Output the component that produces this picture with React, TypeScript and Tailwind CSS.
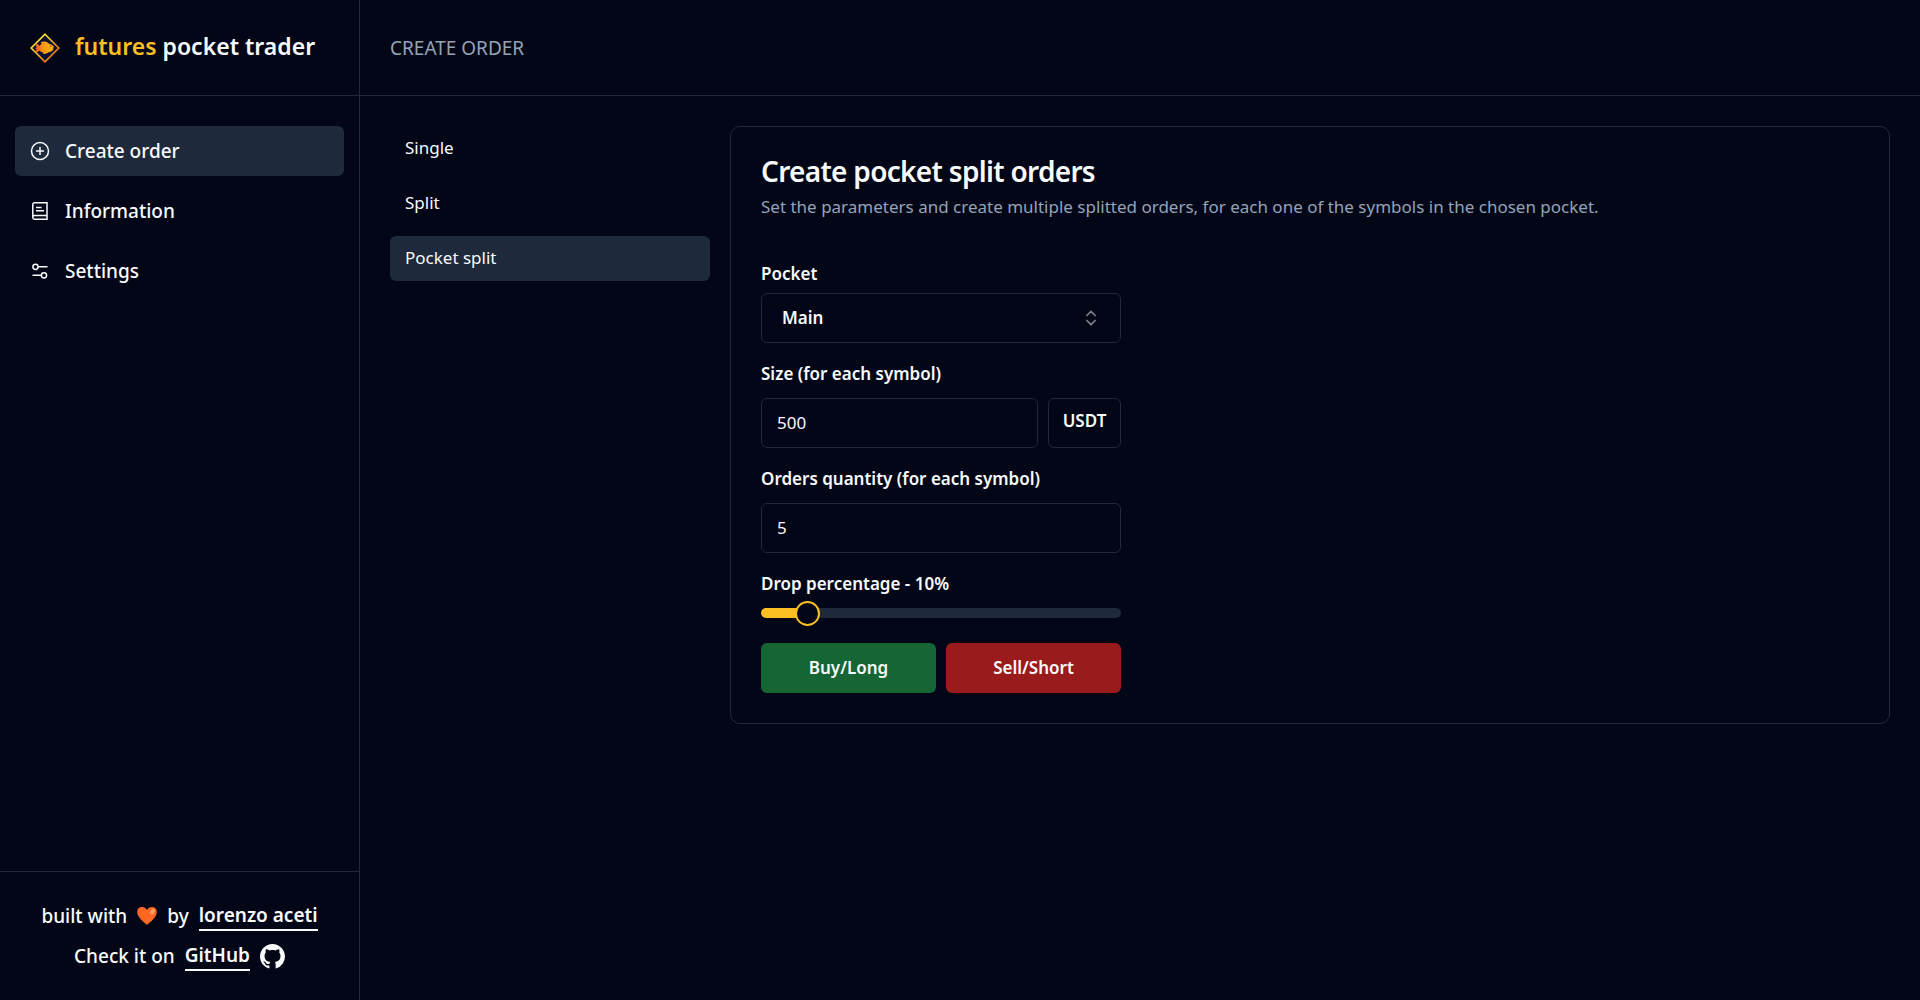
import { useState } from "react";
import type { ReactNode } from "react";
import { ChevronsUpDown } from "lucide-react";

function Logo() {
  return (
    <svg className="size-[30px] shrink-0" viewBox="0 0 30 30" aria-hidden="true">
      <defs>
        <linearGradient id="frame" x1="0" y1="0" x2="1" y2="1">
          <stop offset="0.3" stopColor="#fde02b" />
          <stop offset="0.7" stopColor="#f0831a" />
        </linearGradient>
        <linearGradient id="fish" x1="0" y1="0" x2="1" y2="0">
          <stop offset="0" stopColor="#f4511e" />
          <stop offset="0.45" stopColor="#fb9a10" />
          <stop offset="1" stopColor="#ffb30f" />
        </linearGradient>
      </defs>
      <path d="M15 1.2 28.8 15 15 28.8 1.2 15Z" fill="#0b1036" stroke="url(#frame)" strokeWidth="1.6" />
      <path
        d="M5.500 10.500c1.600.2 3 1.200 4 2.400.6-1 1.300-1.700 2.100-2.200l-.9-1.600c2.700-1 6.200-.7 8 1.300 2.500.7 4.500 2.200 5.300 3.700l-1.300 1.100 1 .7c-1 1.700-3 2.900-5.200 3.400-1.300 1.200-3.500 1.900-5.500 1.700l.3-1.400c-1.600-.3-3-1-3.900-2.100-1 1.100-2.400 1.900-4.200 2.100.3-1.300.8-2.400 1.500-3.300l-1.700-.8 1.700-1.300C6.100 13.200 5.700 12 5.500 10.500Z"
        fill="url(#fish)"
      />
      <circle cx="20.600" cy="13.200" r="0.700" fill="#7a3306" />
    </svg>
  );
}

function PlusCircleIcon() {
  return (
    <svg className="size-5" viewBox="0 0 20 20" fill="none" stroke="currentColor" strokeWidth="1.500" aria-hidden="true">
      <circle cx="10" cy="10" r="8.500" />
      <path d="M10 6v8M6 10h8" />
    </svg>
  );
}

function ReaderIcon() {
  return (
    <svg className="size-5" viewBox="0 0 20 20" fill="none" stroke="currentColor" strokeWidth="1.500" aria-hidden="true">
      <path d="M17 14.500V1.800H4.500A1.700 1.700 0 0 0 2.800 3.500v13a1.700 1.700 0 0 0 1.700 1.700H17v-3.700H4.500a1.700 1.700 0 0 0-1.700 1.700" />
      <path d="M6 6.500h5.500M6 9.800h8" />
    </svg>
  );
}

function SlidersIcon() {
  return (
    <svg className="size-5" viewBox="0 0 20 20" fill="none" stroke="currentColor" strokeWidth="1.500" aria-hidden="true">
      <circle cx="5.500" cy="5.800" r="2.600" />
      <path d="M8.200 5.800H17.500M2.500 14.300h9" />
      <circle cx="14" cy="14.300" r="2.600" />
    </svg>
  );
}

function HeartIcon() {
  return (
    <svg className="size-5" viewBox="0 0 20 20" role="img" aria-label="love">
      <path d="M10 18.800C6.500 15.800.2 11.200.2 5.900.2 3 2.300 1 5 1c2.100 0 4 1 5 3 1-2 2.900-3 5-3 2.700 0 4.800 2 4.800 4.900 0 5.300-6.300 9.900-9.800 12.900Z" fill="#ff6723" />
      <ellipse cx="15.600" cy="5.600" rx="1.900" ry="3.200" transform="rotate(35 15.600 5.600)" fill="#ffa266" />
    </svg>
  );
}

function GitHubIcon() {
  return (
    <svg className="size-[25px]" viewBox="0 0 16 16" fill="currentColor" aria-hidden="true">
      <path d="M8 0C3.580 0 0 3.580 0 8c0 3.540 2.290 6.530 5.470 7.590.4.070.55-.17.55-.38 0-.19-.01-.82-.01-1.490-2.010.37-2.530-.49-2.690-.94-.09-.23-.48-.94-.82-1.130-.28-.15-.68-.52-.01-.53.63-.01 1.080.58 1.230.82.72 1.210 1.870.87 2.330.66.07-.52.28-.87.51-1.070-1.780-.2-3.640-.89-3.640-3.950 0-.87.31-1.590.82-2.150-.08-.2-.36-1.020.08-2.120 0 0 .67-.21 2.200.82.64-.18 1.320-.27 2-.27s1.360.09 2 .27c1.530-1.040 2.200-.82 2.200-.82.44 1.100.16 1.920.08 2.120.51.56.82 1.270.82 2.150 0 3.070-1.870 3.750-3.650 3.950.29.25.54.73.54 1.480 0 1.070-.01 1.930-.01 2.200 0 .21.15.46.55.38A8.010 8.010 0 0 0 16 8c0-4.420-3.580-8-8-8Z" />
    </svg>
  );
}

function NavItem({ icon, label, active }: { icon: ReactNode; label: string; active?: boolean }) {
  return (
    <a
      href="#"
      aria-current={active ? "page" : undefined}
      className={`flex h-[50px] items-center gap-[15px] rounded-md px-[15px] text-[19px] font-medium ${active ? "bg-[#1e293b]" : ""}`}
    >
      {icon}
      {label}
    </a>
  );
}

function SubNavItem({ label, active }: { label: string; active?: boolean }) {
  return (
    <a
      href="#"
      aria-current={active ? "page" : undefined}
      className={`flex h-[45px] rounded-md px-[15px] py-2 text-[17px] leading-[27px] ${active ? "bg-[#1e293b]" : ""}`}
    >
      {label}
    </a>
  );
}

const THUMB = 25;

export default function App() {
  const [size, setSize] = useState("500");
  const [quantity, setQuantity] = useState("5");
  const [drop, setDrop] = useState(10);
  const fill = `calc(${THUMB / 2}px + (100% - ${THUMB}px) * ${drop / 100})`;

  return (
    <div className="flex min-h-screen bg-[#020617] font-['Noto_Sans',sans-serif] text-[#f8fafc]">
      <aside className="flex w-[360px] shrink-0 flex-col border-r border-[#1e293b]">
        <div className="flex h-24 items-center gap-[15px] border-b border-[#1e293b] px-[30px]">
          <Logo />
          <h1 className="pb-0.5 text-[23px] font-semibold whitespace-nowrap">
            <span className="text-[#fbbf24]">futures</span> pocket trader
          </h1>
        </div>
        <nav className="flex flex-1 flex-col gap-2.5 px-[15px] py-[30px]">
          <NavItem icon={<PlusCircleIcon />} label="Create order" active />
          <NavItem icon={<ReaderIcon />} label="Information" />
          <NavItem icon={<SlidersIcon />} label="Settings" />
        </nav>
        <footer className="flex flex-col items-center gap-2.5 border-t border-[#1e293b] py-[29px] text-[19px] leading-[30px] font-medium">
          <p className="flex items-center gap-2.5">
            built with <HeartIcon /> by
            <a href="#" className="border-b-2 border-[#f8fafc] leading-7 font-semibold">
              lorenzo aceti
            </a>
          </p>
          <p className="flex items-center gap-2.5">
            Check it on
            <a href="#" className="flex items-center gap-2.5 font-semibold">
              <span className="border-b-2 border-[#f8fafc] leading-7">GitHub</span>
              <GitHubIcon />
            </a>
          </p>
        </footer>
      </aside>

      <div className="flex min-w-0 flex-1 flex-col">
        <header className="flex h-24 items-center border-b border-[#1e293b] px-[30px]">
          <h2 className="pt-0.5 text-[19px] text-[#94a3b8]">CREATE ORDER</h2>
        </header>
        <main className="flex items-start gap-5 p-[30px]">
          <nav className="flex w-80 shrink-0 flex-col gap-2.5">
            <SubNavItem label="Single" />
            <SubNavItem label="Split" />
            <SubNavItem label="Pocket split" active />
          </nav>

          <section className="min-w-0 flex-1 rounded-[10px] border border-[#1e293b] px-[30px] pt-7 pb-[30px]">
            <h3 className="text-[28px] leading-8 font-semibold tracking-tight">Create pocket split orders</h3>
            <p className="mt-[7px] text-[17px] leading-[25px] text-[#94a3b8]">
              Set the parameters and create multiple splitted orders, for each one of the symbols in the chosen pocket.
            </p>

            <form className="mt-[42px] w-full max-w-[360px] text-[17px]" onSubmit={(e) => e.preventDefault()}>
              <label htmlFor="pocket" className="block leading-[25px] font-semibold">
                Pocket
              </label>
              <div className="relative mt-[7px]">
                <select
                  id="pocket"
                  className="h-[50px] w-full appearance-none rounded-md border border-[#1e293b] bg-transparent px-5 font-semibold"
                >
                  <option>Main</option>
                </select>
                <span className="pointer-events-none absolute inset-y-0 right-5 flex items-center">
                  <ChevronsUpDown className="size-5 opacity-50" aria-hidden="true" />
                </span>
              </div>

              <label htmlFor="size" className="mt-[18px] block leading-[25px] font-semibold">
                Size (for each symbol)
              </label>
              <div className="mt-3 flex gap-2.5">
                <input
                  id="size"
                  value={size}
                  onChange={(e) => setSize(e.target.value)}
                  className="h-[50px] min-w-0 flex-1 rounded-md border border-[#1e293b] bg-transparent px-[15px] pb-0.5"
                />
                <div className="flex h-[50px] w-[73px] justify-center rounded-md border border-[#1e293b] pt-[9px] leading-[25px] font-semibold">
                  USDT
                </div>
              </div>

              <label htmlFor="quantity" className="mt-[18px] block leading-[25px] font-semibold">
                Orders quantity (for each symbol)
              </label>
              <input
                id="quantity"
                value={quantity}
                onChange={(e) => setQuantity(e.target.value)}
                className="mt-3 h-[50px] w-full rounded-md border border-[#1e293b] bg-transparent px-[15px] pb-0.5"
              />

              <label htmlFor="drop" className="mt-[18px] block leading-[25px] font-semibold">
                Drop percentage - {drop}%
              </label>
              <input
                id="drop"
                type="range"
                min={0}
                max={100}
                value={drop}
                onChange={(e) => setDrop(Number(e.target.value))}
                style={{ backgroundImage: `linear-gradient(to right, #fbbf24 ${fill}, #1e293b ${fill})` }}
                className="mt-3 block h-2.5 w-full appearance-none rounded-full [&::-webkit-slider-thumb]:size-[25px] [&::-webkit-slider-thumb]:appearance-none [&::-webkit-slider-thumb]:rounded-full [&::-webkit-slider-thumb]:border-2 [&::-webkit-slider-thumb]:border-[#fbbf24] [&::-webkit-slider-thumb]:bg-[#020617]"
              />

              <div className="mt-[25px] grid grid-cols-2 gap-2.5">
                <button type="submit" className="h-[50px] rounded-md bg-[#166534] font-semibold">
                  Buy/Long
                </button>
                <button type="submit" className="h-[50px] rounded-md bg-[#991b1b] font-semibold">
                  Sell/Short
                </button>
              </div>
            </form>
          </section>
        </main>
      </div>
    </div>
  );
}
